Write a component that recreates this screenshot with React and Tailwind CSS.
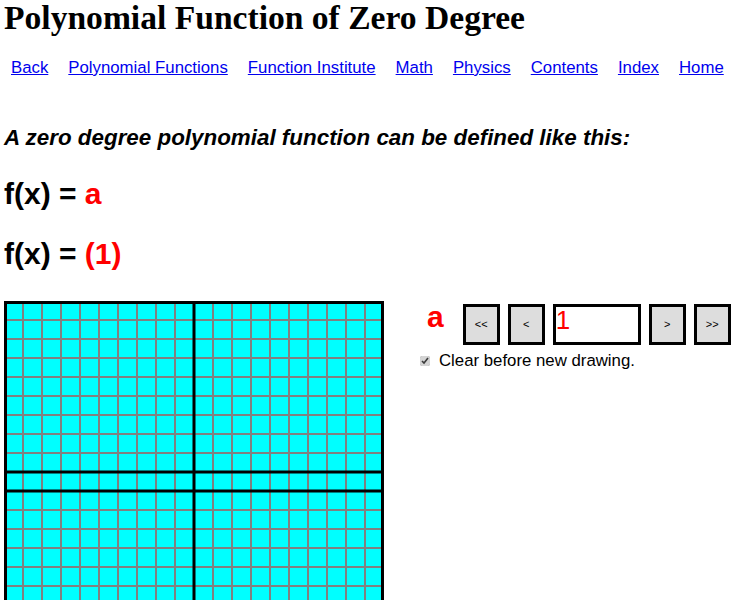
import React from "react";

function Graph() {
  const lines = [];
  for (let k = 1; k < 20; k++) {
    lines.push(<line key={"v" + k} x1={k * 19} y1={0} x2={k * 19} y2={380} stroke="#808080" strokeWidth="2" />);
    lines.push(<line key={"h" + k} x1={0} y1={k * 19} x2={380} y2={k * 19} stroke="#808080" strokeWidth="2" />);
  }
  return (
    <svg width="380" height="380" viewBox="0 0 380 380" className="block shrink-0">
      <rect x="0" y="0" width="380" height="380" fill="#00ffff" />
      {lines}
      <line x1="190" y1="0" x2="190" y2="380" stroke="#000" strokeWidth="3" />
      <line x1="0" y1="190" x2="380" y2="190" stroke="#000" strokeWidth="3" />
      <line x1="0" y1="171" x2="378" y2="171" stroke="#000" strokeWidth="3" />
      <rect x="1.5" y="1.5" width="377" height="377" fill="none" stroke="#000" strokeWidth="3" />
    </svg>
  );
}

function Btn({ children }) {
  return (
    <button className="w-[37px] h-[41px] border-[3px] border-black bg-[#dddddd] text-[11px] leading-none text-black flex items-center justify-center shrink-0 font-['Liberation_Sans',Arial,sans-serif]">
      {children}
    </button>
  );
}

export default function App() {
  const links = ["Back", "Polynomial Functions", "Function Institute", "Math", "Physics", "Contents", "Index", "Home"];
  return (
    <div className="bg-white text-black pl-[4px] font-['Liberation_Sans',Arial,sans-serif] w-[735px] overflow-hidden">
      <h1 className="font-['Liberation_Serif','Times_New_Roman',serif] font-bold text-[33.6px] leading-[36px] whitespace-nowrap">
        Polynomial Function of Zero Degree
      </h1>
      <nav className="mt-[22px] pl-[7px] flex gap-[20px] text-[16.8px] leading-[20px] whitespace-nowrap">
        {links.map((l) => (
          <a key={l} href="#" className="text-[#0000ee] underline">
            {l}
          </a>
        ))}
      </nav>
      <p className="mt-[46px] font-bold italic text-[22.4px] leading-[28px] whitespace-nowrap">
        A zero degree polynomial function can be defined like this:
      </p>
      <p className="mt-[24px] font-bold text-[30px] leading-[36px]">
        f(x) = <span className="text-[#ff0000]">a</span>
      </p>
      <p className="mt-[24px] font-bold text-[30px] leading-[36px]">
        f(x) = <span className="text-[#ff0000]">(1)</span>
      </p>
      <div className="mt-[29px] flex items-start">
        <Graph />
        <div className="ml-[34px] pt-[3px] flex flex-col">
          <div className="flex items-start">
            <span className="ml-[9px] mt-[-2px] mr-[19px] font-bold text-[30px] leading-[30px] text-[#ff0000]">a</span>
            <div className="flex gap-[8px]">
              <Btn>&lt;&lt;</Btn>
              <Btn>&lt;</Btn>
              <div className="w-[88px] h-[41px] border-[3px] border-black bg-white text-[26px] leading-[26px] text-[#ff0000] shrink-0">
                1
              </div>
              <Btn>&gt;</Btn>
              <Btn>&gt;&gt;</Btn>
            </div>
          </div>
          <label className="mt-[6px] flex items-center h-[20px] text-[16.8px] leading-[20px] whitespace-nowrap">
            <input type="checkbox" defaultChecked className="ml-[2px] m-0 w-[10px] h-[10px] accent-[#d4d4d4]" />
            <span className="ml-[9px]">Clear before new drawing.</span>
          </label>
        </div>
      </div>
    </div>
  );
}
